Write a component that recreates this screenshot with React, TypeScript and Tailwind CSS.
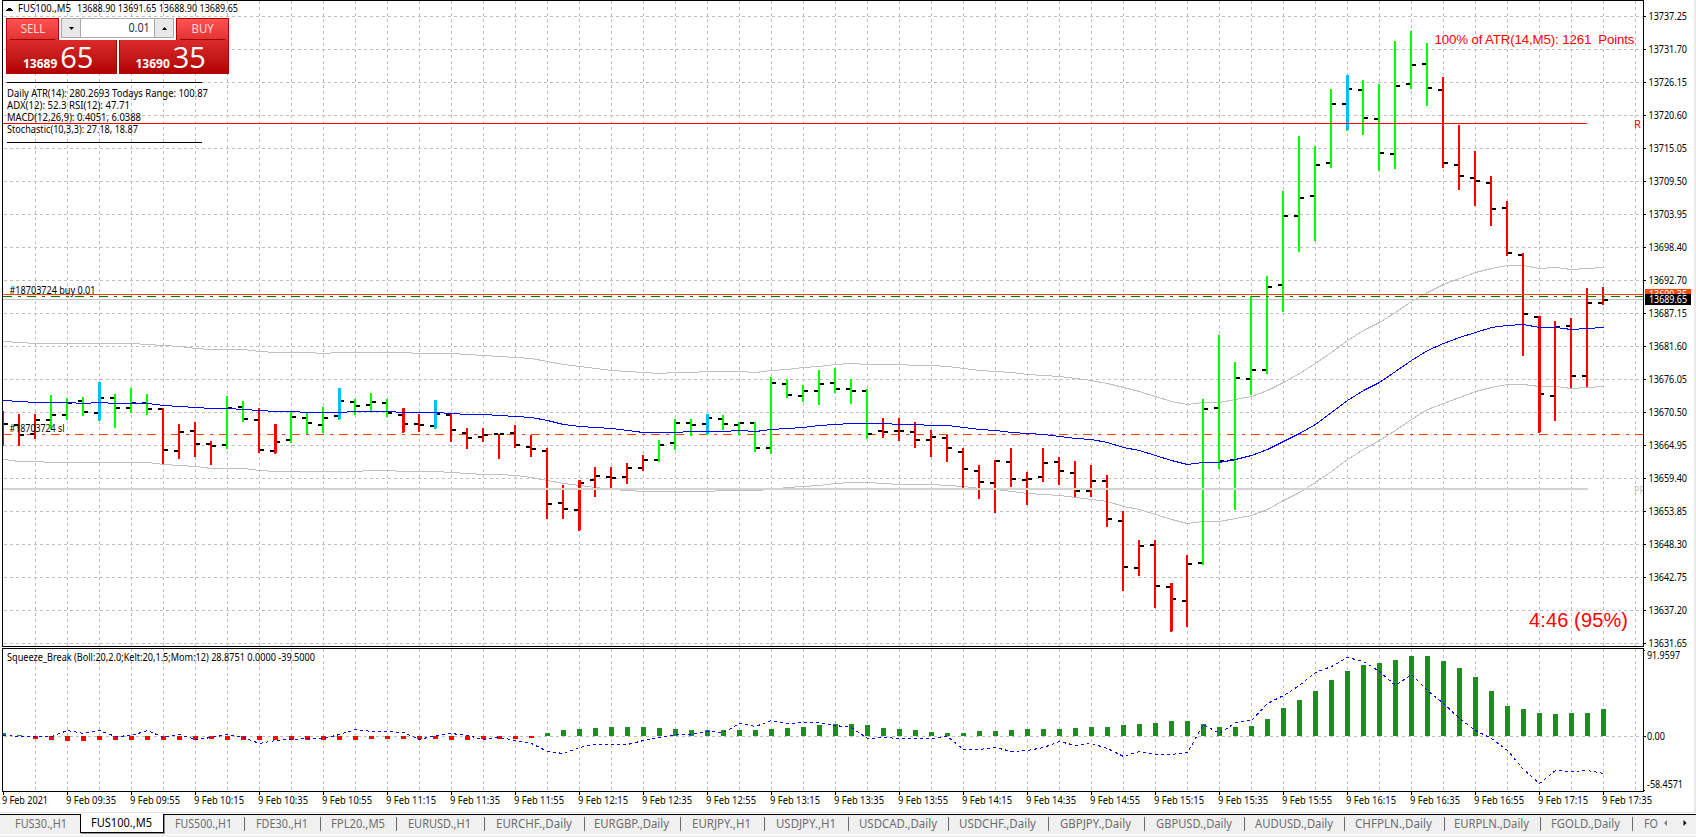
import { ReactNode } from "react";

// [color, high, low, open, close] in chart pixels, one row for each M5 bar
type Bar = [string, number, number, number | null, number];

const BAR_STEP = 16;
const FIRST_X = 3;
const ZERO_Y = 88;

const bars: Bar[] = [
  ["r", 411, 446, null, 424], ["r", 414, 446, 425, 435], ["r", 414, 439, 434, 420], ["g", 395, 429, 420, 415],
  ["g", 398, 420, 415, 403], ["g", 397, 416, 401, 412], ["b", 382, 420, 413, 398], ["g", 394, 428, 398, 408],
  ["g", 388, 413, 408, 403], ["g", 394, 415, 403, 409], ["r", 408, 464, 409, 450], ["r", 424, 459, 451, 432],
  ["r", 422, 457, 431, 444], ["r", 441, 465, 444, 446], ["g", 396, 449, 445, 408], ["g", 401, 422, 407, 419],
  ["r", 408, 453, 420, 450], ["R", 424, 453, 451, 442], ["g", 412, 443, 440, 417], ["g", 413, 434, 418, 423],
  ["g", 407, 433, 425, 418], ["b", 388, 419, 416, 401], ["g", 399, 415, 402, 406], ["g", 393, 412, 405, 402],
  ["g", 399, 417, 403, 413], ["R", 408, 432, 415, 424], ["r", 414, 432, 424, 425], ["b", 400, 428, 426, 414],
  ["r", 414, 442, 415, 430], ["r", 428, 449, 433, 438], ["r", 428, 442, 437, 435], ["r", 434, 459, 434, 434],
  ["r", 425, 448, 433, 445], ["r", 435, 457, 447, 449], ["r", 448, 519, 451, 504], ["r", 485, 519, 503, 509],
  ["R", 480, 530, 510, 483], ["r", 467, 497, 480, 476], ["r", 467, 488, 477, 478], ["r", 463, 484, 477, 468],
  ["r", 455, 471, 468, 460], ["g", 440, 462, 460, 445], ["g", 419, 450, 443, 423], ["g", 419, 436, 423, 425],
  ["b", 414, 434, 424, 418], ["g", 415, 430, 419, 424], ["g", 422, 435, 425, 423], ["g", 422, 452, 423, 448],
  ["g", 377, 454, 448, 383], ["g", 379, 398, 384, 395], ["g", 385, 402, 396, 391], ["g", 370, 405, 391, 384],
  ["g", 368, 393, 383, 389], ["g", 379, 404, 389, 391], ["g", 389, 439, 391, 434], ["r", 418, 438, 431, 432],
  ["r", 418, 441, 431, 431], ["r", 422, 448, 432, 440], ["r", 430, 457, 440, 437], ["r", 435, 462, 438, 448],
  ["r", 448, 488, 452, 469], ["r", 465, 499, 471, 482], ["r", 460, 513, 483, 461], ["r", 448, 487, 462, 479],
  ["r", 472, 505, 480, 479], ["r", 448, 482, 477, 463], ["r", 457, 485, 462, 471], ["r", 461, 497, 473, 491],
  ["r", 465, 497, 491, 481], ["r", 475, 527, 481, 519], ["r", 511, 591, 521, 567], ["r", 540, 576, 568, 546],
  ["r", 540, 608, 545, 586], ["R", 583, 631, 587, 599], ["r", 555, 627, 601, 564], ["g", 399, 565, 563, 409],
  ["g", 335, 469, 408, 461], ["g", 362, 510, 460, 378], ["g", 296, 395, 379, 370], ["g", 276, 374, 370, 287],
  ["g", 191, 312, 285, 216], ["g", 136, 252, 216, 198], ["g", 146, 241, 196, 165], ["g", 89, 168, 163, 104],
  ["b", 75, 130, 104, 89], ["g", 80, 135, 90, 118], ["g", 84, 171, 119, 153], ["g", 41, 169, 154, 86],
  ["g", 31, 89, 84, 65], ["g", 43, 106, 64, 88], ["r", 77, 168, 90, 163], ["r", 125, 190, 165, 176],
  ["r", 151, 206, 178, 181], ["r", 176, 226, 183, 209], ["r", 201, 256, 208, 253], ["r", 253, 356, 255, 314],
  ["R", 316, 432, 317, 394], ["r", 321, 421, 396, 327], ["r", 318, 388, 326, 376], ["r", 288, 387, 376, 303],
  ["r", 287, 305, 303, 300],
];

const middle = [
  400, 401, 402, 402, 402, 403, 402, 403, 403, 403, 405, 406, 407, 408, 408, 409, 410, 411, 411, 412, 412, 412, 411, 411, 411, 412, 412,
  412, 413, 414, 414, 415, 416, 417, 420, 424, 426, 427, 428, 430, 432, 432, 432, 431, 431, 431, 430, 431, 429, 428, 427, 425, 424, 423,
  423, 423, 424, 424, 425, 425, 427, 429, 430, 432, 433, 434, 436, 438, 439, 442, 447, 450, 455, 460, 464, 462, 462, 459, 455, 449,
  441, 433, 424, 412, 400, 390, 382, 371, 360, 350, 343, 337, 332, 327, 325, 324, 327, 327, 329, 328, 327,
];

const upper = [
  341, 342, 343, 343, 343, 343, 343, 343, 343, 344, 345, 346, 348, 349, 349, 349, 351, 352, 352, 352, 353, 352, 352, 352, 352, 352, 353,
  353, 353, 354, 355, 356, 357, 358, 361, 364, 366, 368, 370, 371, 372, 373, 372, 372, 371, 371, 371, 372, 370, 369, 367, 366, 364, 363,
  364, 364, 364, 365, 365, 366, 368, 370, 371, 372, 374, 375, 376, 378, 380, 383, 387, 391, 396, 401, 404, 402, 402, 399, 396, 390,
  382, 373, 363, 352, 340, 330, 322, 312, 301, 292, 284, 278, 272, 268, 265, 265, 268, 267, 269, 268, 267,
];

const lower = [
  459, 461, 461, 462, 462, 462, 462, 462, 462, 462, 464, 465, 466, 468, 468, 468, 470, 471, 471, 471, 471, 471, 471, 470, 470, 471, 471,
  471, 472, 473, 474, 474, 475, 477, 480, 483, 485, 487, 489, 490, 491, 491, 491, 491, 491, 490, 490, 490, 489, 487, 486, 485, 483, 482,
  482, 483, 484, 484, 484, 485, 486, 488, 489, 491, 493, 494, 495, 497, 499, 501, 506, 509, 514, 519, 523, 521, 521, 518, 515, 509,
  500, 492, 482, 471, 459, 449, 440, 430, 419, 409, 403, 397, 391, 387, 384, 384, 386, 386, 388, 387, 386,
];

// squeeze histogram, height in pixels over (green) or under (red) zero
const squeeze = [
  3, 1, -3, -4, -5, -5, -4, -4, -4, -4, -4, -4, -4, -3, -4, -4, -4, -4, -4, -4, -4, -4, -4, -3, -3, -3, -3,
  -3, -4, -4, -3, -3, -3, -2, 3, 6, 7, 8, 9, 9, 9, 8, 7, 6, 6, 6, 6, 6, 7, 8, 9, 11, 12, 12,
  11, 8, 7, 6, 4, 3, 3, 5, 5, 6, 7, 7, 7, 8, 9, 9, 11, 12, 13, 15, 15, 12, 9, 9, 10, 17,
  28, 36, 45, 56, 65, 71, 73, 76, 80, 80, 75, 68, 59, 45, 30, 27, 23, 22, 23, 23, 27,
];

const momentum = [
  87, 88, 88, 88, 82, 85, 82, 88, 87, 82, 89, 86, 91, 89, 86, 89, 95, 92, 91, 90, 90, 86, 81, 83, 83, 84, 91,
  87, 85, 87, 91, 89, 92, 95, 103, 105, 99, 96, 96, 96, 92, 89, 86, 86, 83, 84, 75, 78, 72, 75, 74, 74, 77, 79,
  90, 89, 90, 90, 90, 88, 101, 101, 99, 103, 102, 99, 93, 97, 95, 100, 108, 103, 106, 106, 104, 76, 85, 74, 72, 55,
  47, 37, 24, 18, 9, 13, 23, 37, 26, 42, 55, 70, 82, 90, 102, 121, 135, 122, 123, 122, 125,
];

const prices = [
  "13737.25", "13731.70", "13726.15", "13720.60", "13715.05", "13709.50", "13703.95", "13698.40", "13692.70", "13687.15",
  "13681.60", "13676.05", "13670.50", "13664.95", "13659.40", "13653.85", "13648.30", "13642.75", "13637.20", "13631.65",
];

const times = [
  "9 Feb 2021", "9 Feb 09:35", "9 Feb 09:55", "9 Feb 10:15", "9 Feb 10:35", "9 Feb 10:55", "9 Feb 11:15", "9 Feb 11:35",
  "9 Feb 11:55", "9 Feb 12:15", "9 Feb 12:35", "9 Feb 12:55", "9 Feb 13:15", "9 Feb 13:35", "9 Feb 13:55", "9 Feb 14:15",
  "9 Feb 14:35", "9 Feb 14:55", "9 Feb 15:15", "9 Feb 15:35", "9 Feb 15:55", "9 Feb 16:15", "9 Feb 16:35", "9 Feb 16:55",
  "9 Feb 17:15", "9 Feb 17:35",
];

const tabs = [
  { name: "FUS30.,H1", size: "w-[80px] pl-[4px]", text: 52 },
  { name: "FUS100.,M5", size: "w-[84px]", text: 61, active: true },
  { name: "FUS500.,H1", size: "w-[81px]", text: 57, line: true },
  { name: "FDE30.,H1", size: "w-[76px]", text: 52, line: true },
  { name: "FPL20.,M5", size: "w-[76px]", text: 54, line: true },
  { name: "EURUSD.,H1", size: "w-[88px]", text: 63, line: true },
  { name: "EURCHF.,Daily", size: "w-[100px]", text: 76, line: true },
  { name: "EURGBP.,Daily", size: "w-[96px]", text: 75, line: true },
  { name: "EURJPY.,H1", size: "w-[84px]", text: 59, line: true },
  { name: "USDJPY.,H1", size: "w-[84px]", text: 60, line: true },
  { name: "USDCAD.,Daily", size: "w-[100px]", text: 78, line: true },
  { name: "USDCHF.,Daily", size: "w-[100px]", text: 77, line: true },
  { name: "GBPJPY.,Daily", size: "w-[96px]", text: 71, line: true },
  { name: "GBPUSD.,Daily", size: "w-[100px]", text: 76, line: true },
  { name: "AUDUSD.,Daily", size: "w-[100px]", text: 78, line: true },
  { name: "CHFPLN.,Daily", size: "w-[100px]", text: 77, line: true },
  { name: "EURPLN.,Daily", size: "w-[96px]", text: 75, line: true },
  { name: "FGOLD.,Daily", size: "w-[92px]", text: 69, line: true },
];

const barColors: Record<string, string> = { r: "#ff0000", R: "#ff0000", g: "#00ff00", b: "#00bfff" };

const toX = (i: number) => FIRST_X + i * BAR_STEP;
const toPoints = (ys: number[]) => ys.map((y, i) => `${toX(i) + 0.5},${y + 0.5}`).join(" ");

interface LabelProps {
  x: number;
  y: number;
  width?: number;
  size?: number;
  fill?: string;
  children: ReactNode;
}

function Label({ x, y, width, size = 11, fill = "#000", children }: LabelProps) {
  return (
    <text
      x={x}
      y={y}
      fontSize={size}
      fill={fill}
      textLength={width}
      lengthAdjust="spacingAndGlyphs"
      className="whitespace-pre font-['Noto_Sans',sans-serif]"
    >
      {children}
    </text>
  );
}

function VerticalGrid({ height }: { height: number }) {
  return (
    <g stroke="#c0c0c0" strokeDasharray="3 3">
      {Array.from({ length: 51 }, (_, i) => (
        <line key={i} x1={35.5 + i * 32} x2={35.5 + i * 32} y1={1} y2={height} />
      ))}
    </g>
  );
}

function PriceBar({ bar, index }: { bar: Bar; index: number }) {
  const [kind, high, low, open, close] = bar;
  const x = toX(index);
  const wide = kind === "b" || kind === "R";
  return (
    <g>
      <rect
        x={x - 1}
        y={high}
        width={2}
        height={low - high + (wide ? 1 : 0)}
        fill={kind === "b" ? "#00ff00" : barColors[kind]}
      />
      {open !== null && <rect x={x - 5} y={open - 1} width={4} height={2} />}
      <rect x={x + 1} y={close - 1} width={4} height={2} />
      {wide && <rect x={x - 1} y={high} width={3} height={low - high} fill={barColors[kind]} />}
    </g>
  );
}

function PriceChart() {
  return (
    <svg width={1647} height={647} className="block shrink-0" shapeRendering="crispEdges">
      <defs>
        <clipPath id="plot">
          <rect x={3} y={1} width={1640} height={645} />
        </clipPath>
      </defs>
      <g clipPath="url(#plot)">
        <VerticalGrid height={646} />
        <g stroke="#c0c0c0" strokeDasharray="3 3">
          {prices.map((price, i) => (
            <line key={price} x1={4} x2={1643} y1={16.5 + i * 33} y2={16.5 + i * 33} />
          ))}
        </g>
        <line x1={3} x2={1643} y1={299.5} y2={299.5} stroke="#c0c0c0" />
        <line x1={3} x2={1643} y1={434.5} y2={434.5} stroke="#ff4500" strokeDasharray="9 6 3 6" />
        <g fill="none">
          <polyline points={toPoints(upper)} stroke="#c0c0c0" />
          <polyline points={toPoints(lower)} stroke="#c0c0c0" />
        </g>
        {bars.map((bar, i) => (
          <PriceBar key={i} bar={bar} index={i} />
        ))}
        <polyline points={toPoints(middle)} stroke="#0000ff" fill="none" />
        <rect x={3} y={488} width={1585} height={2} fill="#d3d3d3" />
        <rect x={3} y={123} width={1584} height={1} fill="#ff0000" />
        <rect x={3} y={294} width={1640} height={1} fill="#ff4500" />
        <line x1={3} x2={1643} y1={296.5} y2={296.5} stroke="#008000" strokeDasharray="9 6 3 6" />

        <path d="M6 11h7v-1h-1v-1h-1v-1h-3v1h-1v1h-1z" />
        <Label x={18} y={12} width={53}>FUS100.,M5</Label>
        <Label x={77} y={12} width={161}>13688.90 13691.65 13688.90 13689.65</Label>
        <rect x={7} y={82} width={195} height={1} />
        <Label x={7} y={97} width={201}>Daily ATR(14): 280.2693 Todays Range: 100.87</Label>
        <Label x={7} y={109} width={123}>ADX(12): 52.3 RSI(12): 47.71</Label>
        <Label x={7} y={121} width={134}>MACD(12,26,9): 0.4051, 6.0388</Label>
        <Label x={7} y={133} width={131}>Stochastic(10,3,3): 27.18, 18.87</Label>
        <rect x={7} y={142} width={195} height={1} />
        <Label x={9.5} y={294} width={86}>#18703724 buy 0.01</Label>
        <Label x={9.5} y={432} width={55}>#18703724 sl</Label>
        <Label x={1634} y={128} fill="#ff0000">R</Label>
        <Label x={1634} y={494} width={11} fill="#c0c0c0">PP</Label>
        <text x={1434.5} y={44} fontSize={13.3} textLength={200} fill="#ff0000" className="whitespace-pre font-['Liberation_Sans',sans-serif]">
          {"100% of ATR(14,M5): 1261  Points"}
        </text>
        <text x={1529} y={627} fontSize={20} textLength={99} fill="#ff0000" className="font-['Liberation_Sans',sans-serif]">
          4:46 (95%)
        </text>
      </g>
      <rect x={2.5} y={0.5} width={1641} height={646} fill="none" stroke="#000" />
      {prices.map((price, i) => (
        <rect key={price} x={1644} y={16 + i * 33} width={2} height={1} />
      ))}
    </svg>
  );
}

function PriceAxis() {
  return (
    <div className="relative flex h-[647px] w-[47px] flex-col">
      {prices.map((price) => (
        <svg key={price} width={47} height={33} className="block shrink-0 overflow-visible">
          <Label x={1.5} y={20} width={38.5}>{price}</Label>
        </svg>
      ))}
      {/* ask and bid tags */}
      <svg width={46} height={16} className="absolute left-[-2px] top-[289px] block overflow-visible">
        <rect width={46} height={16} fill="#ff4500" />
        <Label x={4} y={9} width={38} fill="#fff">13690.35</Label>
        <rect y={5} width={46} height={11} />
        <Label x={4} y={14} width={38} fill="#fff">13689.65</Label>
      </svg>
    </div>
  );
}

function SqueezeChart() {
  return (
    <svg width={1647} height={144} className="block shrink-0" shapeRendering="crispEdges">
      <VerticalGrid height={143} />
      <line x1={4} x2={1643} y1={ZERO_Y + 0.5} y2={ZERO_Y + 0.5} stroke="#c0c0c0" strokeDasharray="3 3" />
      {squeeze.map((value, i) => (
        <rect
          key={i}
          x={Math.max(toX(i) - 2, 3)}
          y={value > 0 ? ZERO_Y - value : ZERO_Y}
          width={i === 0 ? 3 : 5}
          height={Math.abs(value)}
          fill={value > 0 ? "#228b22" : "#ff0000"}
        />
      ))}
      <polyline points={toPoints(momentum)} fill="none" stroke="#0000ff" strokeDasharray="3 3" />
      <Label x={7} y={13} width={308}>Squeeze_Break (Boll:20,2.0;Kelt:20,1.5;Mom:12) 28.8751 0.0000 -39.5000</Label>
      <rect x={2.5} y={0.5} width={1641} height={143} fill="none" stroke="#000" />
      <path d="M1644 2h1v1h-1zM1644 88h2v1h-2zM1644 142h1v1h-1z" />
    </svg>
  );
}

function SqueezeAxis() {
  return (
    <svg width={47} height={144} className="block overflow-visible">
      <Label x={0} y={11} width={33}>91.9597</Label>
      <Label x={0} y={92} width={18}>0.00</Label>
      <Label x={0} y={140} width={36}>-58.4571</Label>
    </svg>
  );
}

function TimeAxis() {
  return (
    <div className="flex h-[20px] pl-[2px]">
      {times.map((time, i) => (
        <svg key={time} width={64} height={20} className="block shrink-0 overflow-visible">
          <rect x={1} width={1} height={3} />
          <Label x={0} y={12} width={i === 0 ? 46 : 50}>{time}</Label>
        </svg>
      ))}
    </div>
  );
}

function QuoteBox({ size, price, pips }: { size: string; price: string; pips: string }) {
  return (
    <div
      className={`flex h-[34px] items-end justify-center border border-t-0 border-[#b00000] bg-linear-to-b from-[#db2a2a] to-[#b00000] pr-[7px] text-white ${size}`}
    >
      <span className="mb-[3px] text-[12px] leading-[12px] font-bold">{price}</span>
      <span className="mb-[3px] ml-[3px] text-[29px] leading-[27px] tracking-[-0.2px]">{pips}</span>
    </div>
  );
}

function SideButton({ children }: { children: ReactNode }) {
  return (
    <div className="flex h-[22px] w-[53px] flex-col items-center border border-b-0 border-[#b40000] bg-linear-to-b from-[#ff5252] to-[#e03232] text-[12px] text-[#ffe0e0]">
      <span className="h-[20px] scale-x-95 leading-[20px]">{children}</span>
      <span className="h-px w-[45px] shrink-0 bg-[#a00000]" />
    </div>
  );
}

function TradePanel() {
  return (
    <div className="absolute left-[6px] top-[18px] w-[223px] bg-white font-['Open_Sans','Noto_Sans',sans-serif]">
      <div className="flex justify-between">
        <SideButton>SELL</SideButton>
        <div className="flex h-[20px] w-[113px] border border-[#a9a9b0] text-[12px] text-[#202040]">
          <div className="flex w-[19px] items-center justify-center border-r border-[#a9a9b0] bg-[#e8e8e8]">
            <svg width={5} height={3}><path d="M0 0h5l-2.5 3z" /></svg>
          </div>
          <div className="flex-1 pr-[4px] text-right leading-[18px]">
            <span className="inline-block origin-right scale-x-90">0.01</span>
          </div>
          <div className="flex w-[19px] items-center justify-center border-l border-[#a9a9b0] bg-[#e8e8e8]">
            <svg width={5} height={3}><path d="M0 3h5l-2.5 -3z" /></svg>
          </div>
        </div>
        <SideButton>BUY</SideButton>
      </div>
      <div className="flex justify-between">
        <QuoteBox size="w-[111px]" price="13689" pips="65" />
        <QuoteBox size="w-[110px]" price="13690" pips="35" />
      </div>
    </div>
  );
}

function ChartTabs() {
  return (
    <div className="flex h-[20px] shrink-0 items-start border-t border-black bg-[#f0f0f0]">
      {tabs.map((tab) => (
        <div
          key={tab.name}
          className={`flex shrink-0 items-center justify-center ${tab.size} ${
            tab.active ? "-mt-px h-[19px] border border-t-0 border-black bg-white shadow-[1px_1px_0_#909090]" : "h-[18px]"
          }`}
        >
          <svg width={tab.text + 2} height={18} className="mx-auto block shrink-0 overflow-visible">
            <Label x={0} y={13} width={tab.text} size={12.5} fill={tab.active ? "#000" : "#6d6d6d"}>
              {tab.name}
            </Label>
          </svg>
          {tab.line && <span className="h-[14px] w-px bg-[#6d6d6d]" />}
        </div>
      ))}
      <svg width={63} height={18} className="block shrink-0 overflow-visible">
        <Label x={11} y={13} width={14} size={12.5} fill="#6d6d6d">FO</Label>
        <path d="M34 5v6l-3 -3z" fill="#808080" />
        <path d="M50.5 5v6l3 -3z" />
      </svg>
    </div>
  );
}

export default function App() {
  return (
    <div className="flex h-[837px] w-[1696px] flex-col overflow-hidden bg-white">
      <div className="relative flex h-[812px] shrink-0 flex-col border-r-2 border-[#e8e8e8]">
        <div className="flex">
          <PriceChart />
          <PriceAxis />
        </div>
        <div className="mt-px flex">
          <SqueezeChart />
          <SqueezeAxis />
        </div>
        <TimeAxis />
        <TradePanel />
      </div>
      <div className="h-px shrink-0 bg-[#e3e3e3]" />
      <div className="h-px shrink-0 bg-white" />
      <ChartTabs />
      <div className="flex-1 border-t border-white bg-[#f0f0f0]" />
    </div>
  );
}
